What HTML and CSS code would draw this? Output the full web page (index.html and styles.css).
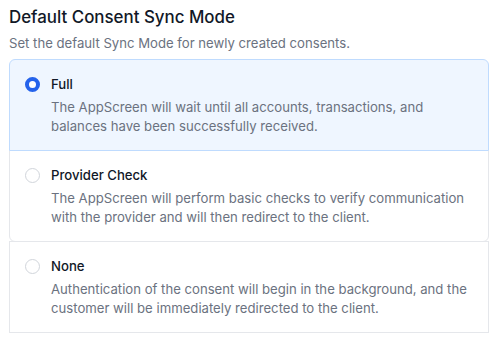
FILE: index.html
```html
<!DOCTYPE html>
<html>
<head>
<meta charset="utf-8">
<link rel="stylesheet" href="styles.css">
</head>
<body>
<div class="page">
  <h2 class="title">Default Consent Sync Mode</h2>
  <p class="subtitle">Set the default Sync Mode for newly created consents.</p>
  <div class="group">
    <label class="option option-first is-checked">
      <span class="radio radio-checked"></span>
      <span class="body">
        <span class="name">Full</span>
        <span class="desc">The AppScreen will wait until all accounts, transactions, and balances have been successfully received.</span>
      </span>
    </label>
    <label class="option option-mid">
      <span class="radio"></span>
      <span class="body">
        <span class="name">Provider Check</span>
        <span class="desc">The AppScreen will perform basic checks to verify communication with the provider and will then redirect to the client.</span>
      </span>
    </label>
    <label class="option option-last">
      <span class="radio"></span>
      <span class="body">
        <span class="name">None</span>
        <span class="desc">Authentication of the consent will begin in the background, and the customer will be immediately redirected to the client.</span>
      </span>
    </label>
  </div>
</div>
</body>
</html>
```

FILE: styles.css
```css
* { box-sizing: border-box; }
html, body { margin: 0; padding: 0; background: #ffffff; }
body { font-family: Inter, "Noto Sans", sans-serif; color: #111827; }
.page { padding: 4px 10px 0 9px; width: 499px; }
.title { margin: 0; font-size: 16.9px; line-height: 26px; font-weight: 500; color: #111827; }
.subtitle { margin: 4px 0 0; font-size: 13.15px; line-height: 19px; color: #6b7280; }
.group { margin-top: 6px; display: flex; flex-direction: column; width: 480px; }
.option { display: flex; gap: 11px; padding: 15px 15px 14px 15px; border: 1px solid #e5e7eb; background: #fff; margin-top: -1px; }
.option-first { margin-top: 0; border-radius: 6px 6px 0 0; }
.option-mid { border-radius: 0 0 6px 6px; }
.is-checked { background: #eff6ff; border-color: #bfdbfe; position: relative; z-index: 1; }
.radio { flex: none; width: 15px; height: 15px; margin-top: 2px; border-radius: 50%; border: 1px solid #d1d5db; background: #fff; }
.radio-checked { border: 4.5px solid #2563eb; background: #fff; }
.body { display: flex; flex-direction: column; }
.name { font-size: 13.15px; line-height: 19px; font-weight: 500; color: #111827; }
.desc { margin-top: 4px; font-size: 13.15px; line-height: 19px; color: #6b7280; }
```
